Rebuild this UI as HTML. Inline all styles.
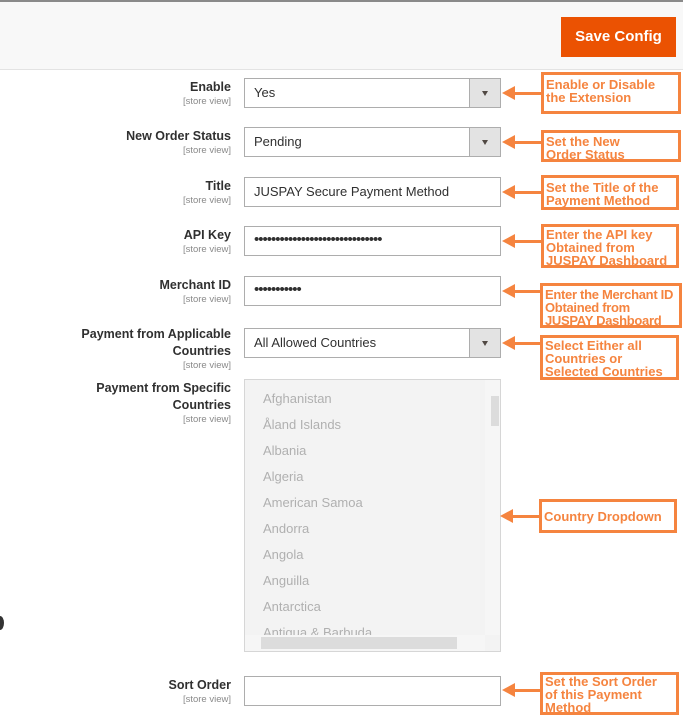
<!DOCTYPE html>
<html><head><meta charset="utf-8"><style>
*{box-sizing:border-box;margin:0;padding:0}
body{width:683px;height:727px;position:relative;background:#fff;font-family:"Liberation Sans",sans-serif;overflow:hidden;color:#303030}
.hdr{position:absolute;left:0;top:0;width:683px;height:70px;background:#f8f8f8;border-top:2px solid #8a8a8a;border-bottom:1px solid #e3e3e3}
.btn{position:absolute;left:561px;top:15px;width:115px;height:40px;background:#eb5202;color:#fff;font-size:15px;font-weight:bold;text-align:center;line-height:40px}
.lbl{position:absolute;right:452px;text-align:right;font-size:12.5px;font-weight:bold;color:#303030;line-height:17px}
.lbl small{display:block;font-size:9.5px;font-weight:normal;color:#8a8a8a;line-height:11px}
.in{position:absolute;left:244px;width:257px;height:30px;border:1px solid #adadad;background:#fff;font-size:13px;line-height:28px;padding-left:9px;color:#303030}
.in .dd{position:absolute;right:0;top:0;width:31px;height:28px;background:#e3e3e3;border-left:1px solid #adadad}
.in .dd:after{content:"";position:absolute;left:12px;top:12px;border-left:3.5px solid transparent;border-right:3.5px solid transparent;border-top:5px solid #514943}
.pw{font-size:15px;letter-spacing:-1px;line-height:26px}
.ann{position:absolute;border:3px solid #f5843f;color:#f5843f;font-weight:bold;font-size:13px;line-height:13px;padding:3px 0 0 2px;background:#fff;white-space:nowrap}
.arr{position:absolute;height:3px;background:#f5843f;width:30px}
.arr:before{content:"";position:absolute;left:-12px;top:-6px;border-top:7.5px solid transparent;border-bottom:7.5px solid transparent;border-right:13px solid #f5843f}
.ms{position:absolute;left:244px;top:379px;width:257px;height:273px;border:1px solid #d6d6d6;background:#f3f3f3}
.ms div{position:absolute;left:18px;font-size:13px;color:#b0b0b0}
</style></head><body>
<div class="hdr"><div class="btn">Save Config</div></div>

<div class="lbl" style="top:79px">Enable<small>[store view]</small></div>
<div class="in" style="top:78px">Yes<span class="dd"></span></div>

<div class="lbl" style="top:128px">New Order Status<small>[store view]</small></div>
<div class="in" style="top:127px">Pending<span class="dd"></span></div>

<div class="lbl" style="top:178px">Title<small>[store view]</small></div>
<div class="in" style="top:177px">JUSPAY Secure Payment Method</div>

<div class="lbl" style="top:227px">API Key<small>[store view]</small></div>
<div class="in pw" style="top:226px">••••••••••••••••••••••••••••••</div>

<div class="lbl" style="top:277px">Merchant ID<small>[store view]</small></div>
<div class="in pw" style="top:276px">•••••••••••</div>

<div class="lbl" style="top:326px">Payment from Applicable<br>Countries<small>[store view]</small></div>
<div class="in" style="top:328px">All Allowed Countries<span class="dd"></span></div>

<div class="lbl" style="top:380px">Payment from Specific<br>Countries<small>[store view]</small></div>
<div class="ms">
<div style="top:11px">Afghanistan</div>
<div style="top:37px">Åland Islands</div>
<div style="top:63px">Albania</div>
<div style="top:89px">Algeria</div>
<div style="top:115px">American Samoa</div>
<div style="top:141px">Andorra</div>
<div style="top:167px">Angola</div>
<div style="top:193px">Anguilla</div>
<div style="top:219px">Antarctica</div>
<div style="top:245px;height:12px;overflow:hidden">Antigua &amp; Barbuda</div>
<span style="position:absolute;left:240px;top:0;width:15px;height:255px;background:#f6f6f6"></span>
<span style="position:absolute;left:246px;top:16px;width:8px;height:30px;background:#dcdcdc"></span>
<span style="position:absolute;left:0;top:255px;width:240px;height:16px;background:#f6f6f6"></span>
<span style="position:absolute;left:16px;top:257px;width:196px;height:12px;background:#dcdcdc"></span>
</div>

<div class="lbl" style="top:677px">Sort Order<small>[store view]</small></div>
<div class="in" style="top:676px"></div>

<div class="arr" style="left:514px;top:92px"></div>
<div class="ann" style="left:541px;top:72px;width:140px;height:42px">Enable or Disable<br>the Extension</div>
<div class="arr" style="left:514px;top:141px"></div>
<div class="ann" style="left:541px;top:130px;width:140px;height:32px;padding-top:2px">Set the New<br>Order Status</div>
<div class="arr" style="left:514px;top:191px"></div>
<div class="ann" style="left:541px;top:175px;width:138px;height:35px">Set the Title of the<br>Payment Method</div>
<div class="arr" style="left:514px;top:240px"></div>
<div class="ann" style="left:541px;top:224px;width:138px;height:44px;padding-top:1px">Enter the API key<br>Obtained from<br>JUSPAY Dashboard</div>
<div class="arr" style="left:514px;top:290px"></div>
<div class="ann" style="left:540px;top:283px;width:142px;height:45px;padding-top:2px;letter-spacing:-0.3px">Enter the Merchant ID<br>Obtained from<br>JUSPAY Dashboard</div>
<div class="arr" style="left:514px;top:342px"></div>
<div class="ann" style="left:540px;top:335px;width:139px;height:45px;padding-top:1px">Select Either all<br>Countries or<br>Selected Countries</div>
<div class="arr" style="left:512px;top:515px"></div>
<div class="ann" style="left:539px;top:499px;width:138px;height:34px;padding-top:8px">Country Dropdown</div>
<div class="arr" style="left:514px;top:689px"></div>
<div class="ann" style="left:540px;top:672px;width:139px;height:43px;padding-top:0">Set the Sort Order<br>of this Payment<br>Method</div>
<span style="position:absolute;left:-4px;top:616px;width:8px;height:14px;border-radius:50%;background:#333"></span>
</body></html>
